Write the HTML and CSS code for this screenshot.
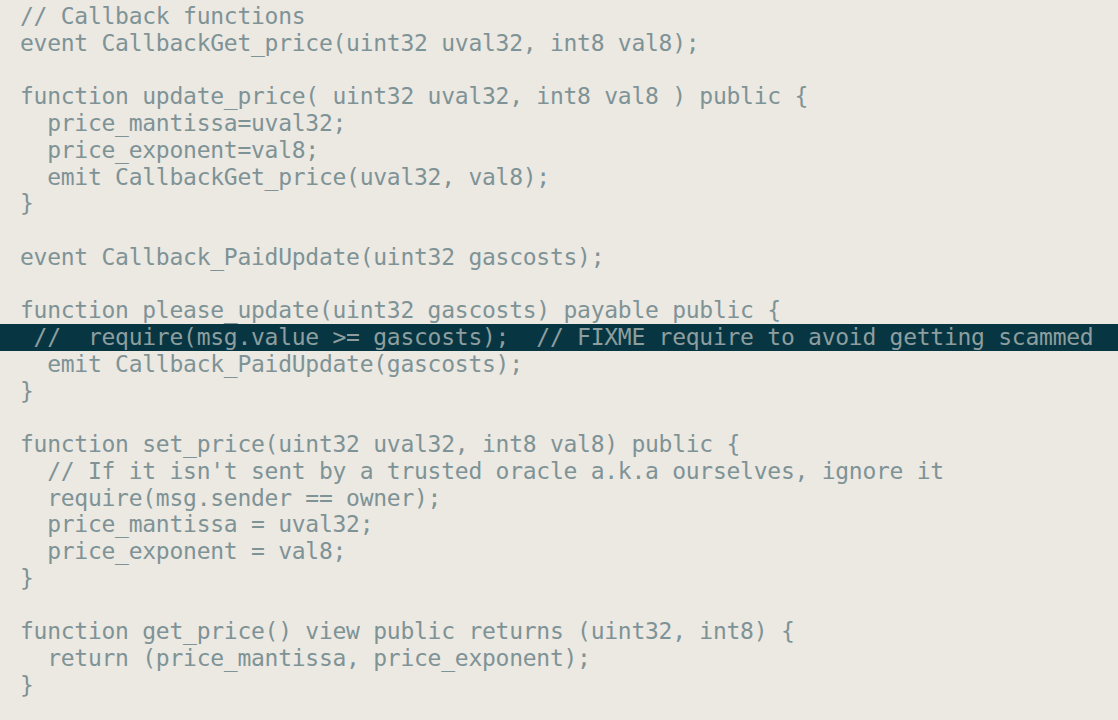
FILE: index.html
```html
<!DOCTYPE html>
<html>
<head>
<meta charset="utf-8">
<link rel="stylesheet" href="styles.css">
</head>
<body>
<div class="code">
<div class="line">// Callback functions</div>
<div class="line">event CallbackGet_price(uint32 uval32, int8 val8);</div>
<div class="line"> </div>
<div class="line">function update_price( uint32 uval32, int8 val8 ) public {</div>
<div class="line">  price_mantissa=uval32;</div>
<div class="line">  price_exponent=val8;</div>
<div class="line">  emit CallbackGet_price(uval32, val8);</div>
<div class="line">}</div>
<div class="line"> </div>
<div class="line">event Callback_PaidUpdate(uint32 gascosts);</div>
<div class="line"> </div>
<div class="line">function please_update(uint32 gascosts) payable public {</div>
<div class="line hl"> //  require(msg.value &gt;= gascosts);  // FIXME require to avoid getting scammed</div>
<div class="line">  emit Callback_PaidUpdate(gascosts);</div>
<div class="line">}</div>
<div class="line"> </div>
<div class="line">function set_price(uint32 uval32, int8 val8) public {</div>
<div class="line">  // If it isn't sent by a trusted oracle a.k.a ourselves, ignore it</div>
<div class="line">  require(msg.sender == owner);</div>
<div class="line">  price_mantissa = uval32;</div>
<div class="line">  price_exponent = val8;</div>
<div class="line">}</div>
<div class="line"> </div>
<div class="line">function get_price() view public returns (uint32, int8) {</div>
<div class="line">  return (price_mantissa, price_exponent);</div>
<div class="line">}</div>
</div>
</body>
</html>
```
FILE: styles.css
```css
html, body {
  margin: 0;
  padding: 0;
  background: #ece8e2;
}
body {
  width: 1118px;
  height: 720px;
  overflow: hidden;
}
.code {
  padding-top: 3px;
  font-family: "DejaVu Sans Mono", "Liberation Mono", monospace;
  font-size: 23px;
  letter-spacing: -0.26px;
  line-height: 26.76px;
  color: #7e9396;
}
.line {
  white-space: pre;
  padding-left: 20px;
  height: 26.76px;
}
.hl {
  background: #073642;
  color: #8e9e9f;
}
```
